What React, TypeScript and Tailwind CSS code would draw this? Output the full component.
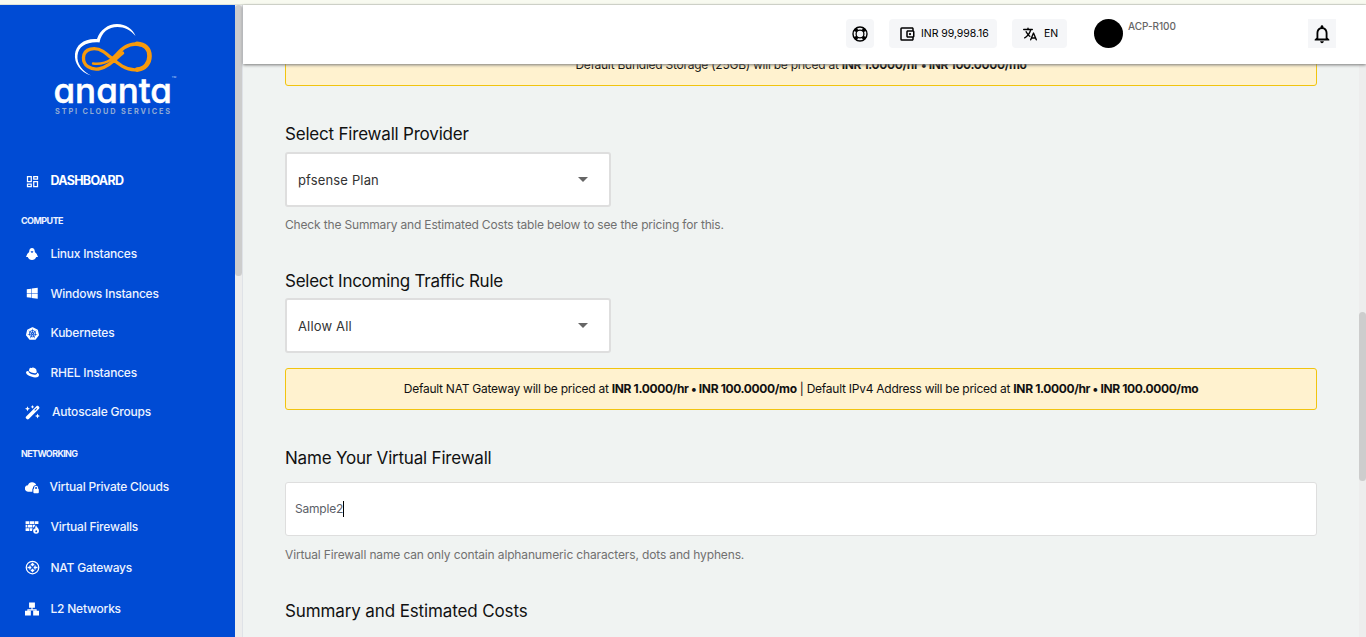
import type { ReactNode } from "react";
import { FaRedhat, FaWindows } from "react-icons/fa6";
import { IoLanguage } from "react-icons/io5";
import { MdNotificationsNone, MdOutlineDashboard, MdOutlineAccountBalanceWallet } from "react-icons/md";
import { SiKubernetes } from "react-icons/si";

function Penguin() {
  return (
    <svg width="12" height="12" viewBox="0 0 24 24" fill="currentColor">
      <path fillRule="evenodd" d="M12 0C8.500 0 6.500 3 6.500 6.500 6.500 8.500 4 10 2.500 12L0 18h3.500C5 22 8 24 12 24s7-2 8.500-6H24l-2.500-6c-1.500-2-4-3.500-4-5.500C17.500 3 15.500 0 12 0ZM12 6l-3 1.500L12 10l3-2.500L12 6Z" />
    </svg>
  );
}

function CloudLock() {
  return (
    <svg width="14" height="14" viewBox="0 0 24 24" fill="currentColor">
      <path d="M13 20H5.500A5.500 5.500 0 0 1 5 9a7.500 7.500 0 0 1 14.200-.5c-3.200 0-5.700 2.300-5.700 5.500-.5.400-.9 1.200-.9 2V20Z" />
      <path fillRule="evenodd" d="M15.500 15v-1.500a3.500 3.500 0 0 1 7 0V15c.7.200 1.200.8 1.200 1.500V21c0 .9-.6 1.500-1.500 1.500h-6.400c-.9 0-1.500-.6-1.500-1.500v-4.500c0-.7.500-1.300 1.200-1.500Zm1.800 0h3.400v-1.500a1.700 1.700 0 0 0-3.400 0V15Z" />
    </svg>
  );
}

function FireWallIcon() {
  return (
    <svg width="14" height="14" viewBox="0 0 24 24" fill="currentColor">
      <path d="M1 2h6v5H1zM8 2h8v5H8zM17 2h6v5h-6zM1 8h3v5H1zM5 8h7v5H5zM13 8h5l-3 5h-2zM1 14h6v5H1zM8 14h5l-1 5H8z" />
      <path fillRule="evenodd" d="M19 9c.5 3 5 5 5 9.500a5 5 0 0 1-10 0c0-2 1-3.500 2.200-4.500.1 1 .5 1.700 1.200 2C17.300 13.500 17.500 11 19 9Zm.3 8c-1.500 1-1.800 2-1.500 3 .5 1.500 3 1.200 3-.7 0-.8-.7-1.500-1.500-2.300Z" />
    </svg>
  );
}

function GatewayIcon() {
  return (
    <svg width="15" height="15" viewBox="0 0 24 24" fill="none" stroke="currentColor" strokeWidth="2">
      <circle cx="12" cy="12" r="10" />
      <path fill="currentColor" stroke="none" d="m12 4 4 4.500h-2.700V10h-2.600V8.500H8zM12 20l4-4.500h-2.700V14h-2.600v1.500H8zM10.500 12l-3.500 4v-2.700H4v-2.600h3V8zM13.500 12l3.500-4v2.700h3v2.600h-3V16z" />
    </svg>
  );
}

function LanIcon() {
  return (
    <svg width="14" height="14" viewBox="0 0 24 24" fill="currentColor">
      <path d="M7 1h10v9h-4v2.500h7V15h4v8H14v-8h4v-.5H6v.5h4v8H0v-8h4v-2.500h7V10H7z" />
    </svg>
  );
}

function WandIcon() {
  return (
    <svg width="15" height="15" viewBox="0 0 24 24" fill="currentColor">
      <path fillRule="evenodd" d="M18.200 1.800c1-1 2.300-1 3.200-.1l1 1c.9.900.9 2.200 0 3.200L6 22.300c-1 1-2.300 1-3.200.1l-1-1c-.9-.9-.9-2.200 0-3.200L18.200 1.800Zm.1 3L15 8.100l1 1 3.300-3.300z" />
      <path d="m4 2 1.200 2.800L8 6 5.200 7.200 4 10 2.800 7.200 0 6l2.800-1.200zM12 0l.9 2.100L15 3l-2.100.9L12 6l-.9-2.100L9 3l2.100-.9zM20 13.500l1.200 2.800L24 17.500l-2.800 1.200L20 21.500l-1.200-2.800L16 17.500l2.800-1.200z" />
    </svg>
  );
}

function Lifebuoy() {
  return (
    <svg width="16" height="16" viewBox="0 0 16 16" fill="none" stroke="#000">
      <circle cx="8" cy="8" r="7" strokeWidth="1.400" />
      <circle cx="8" cy="8" r="3.900" strokeWidth="1.300" />
      <circle cx="8" cy="8" r="5.500" strokeWidth="3.400" pathLength="80" strokeDasharray="8 12" strokeDashoffset="-6" />
    </svg>
  );
}

interface NavItemProps {
  icon: ReactNode;
  label: string;
  row: string;
  text?: string;
}

function NavItem({ icon, label, row, text = "ml-[10.5px] text-[12px] font-medium tracking-[-0.22px]" }: NavItemProps) {
  return (
    <a className={`flex shrink-0 items-center pl-[24px] text-[#edf3ff] ${row}`}>
      <span className="flex w-4 shrink-0 justify-center text-white">{icon}</span>
      <span className={`whitespace-nowrap ${text}`}>{label}</span>
    </a>
  );
}

function Logo() {
  return (
    <svg className="mt-[15px] ml-[50px] block shrink-0" width="136" height="100" viewBox="50 20 136 100">
      <path fill="#fff" d="M91 75.500C80 72 74 63 75 54c1-9 9-16 22-15 3-9 11-15 20-15 9 0 16 5 18.500 12-5-6-11-9-18-9-9 0-16 5-18 15.500-13-1-21 4-22 13-1 8 5 16 13.500 20Z" />
      <g fill="none" stroke="#f79a0b" strokeLinecap="round">
        <path strokeWidth="2.400" d="M93 63.500c7 .8 13-.5 18-4l12-6.500" />
        <path strokeWidth="3.300" d="M112 59c7-6 12-15 24-15 8 0 13.500 4.500 13.500 12.200S144 69.800 135 69.800c-14 0-22-12-32-18.500-8-5-19-3-19.500 6-.5 8.500 7.500 12.700 15 11.700 8-1.200 14-7 24-16" />
        <path strokeWidth="4.600" d="M137 43.800c8 .4 12.500 5 12.500 12.200S145 69 137 69.600" />
      </g>
      <text x="53.500" y="102.500" fill="#fff" fontFamily="Inter, sans-serif" fontSize="35" fontWeight="500" stroke="#fff" strokeWidth=".5" textLength="118.500" lengthAdjust="spacingAndGlyphs" className="[font-feature-settings:'cv11']">ananta</text>
      <text x="171.500" y="82" fill="#9dbdf3" fontFamily="Inter, sans-serif" fontSize="8">™</text>
      <text x="55" y="113.500" fill="#8faad3" fontFamily="Inter, sans-serif" fontSize="7.300" fontWeight="700" textLength="115">STPI CLOUD SERVICES</text>
    </svg>
  );
}

function Sidebar() {
  return (
    <aside className="flex w-[235px] shrink-0 flex-col overflow-hidden bg-[#004bd4]">
      <Logo />
      <NavItem icon={<MdOutlineDashboard size={15} />} label="DASHBOARD" row="mt-[45px] h-8" text="ml-[10.5px] text-[12.5px] font-bold tracking-[-0.7px] text-white" />
      <h6 className="mt-[16px] h-4 shrink-0 pl-[21px] text-[9px] leading-4 font-bold tracking-[-0.55px] text-[#edf3ff]">COMPUTE</h6>
      <NavItem icon={<Penguin />} label="Linux Instances" row="mt-[5px] h-10" />
      <NavItem icon={<FaWindows size={12.500} />} label="Windows Instances" row="h-[39px]" />
      <NavItem icon={<SiKubernetes size={13} />} label="Kubernetes" row="h-10" />
      <NavItem icon={<FaRedhat size={13} />} label="RHEL Instances" row="h-[39px]" />
      <NavItem icon={<WandIcon />} label="Autoscale Groups" row="h-10" text="ml-3 text-[12px] font-medium tracking-[-0.2px]" />
      <h6 className="mt-[14px] h-4 shrink-0 pl-[21px] text-[9px] leading-4 font-bold tracking-[-0.65px] text-[#edf3ff]">NETWORKING</h6>
      <NavItem icon={<CloudLock />} label="Virtual Private Clouds" row="mt-[5px] h-10" text="ml-[9.5px] text-[12px] font-medium tracking-[-0.22px]" />
      <NavItem icon={<FireWallIcon />} label="Virtual Firewalls" row="h-10" />
      <NavItem icon={<GatewayIcon />} label="NAT Gateways" row="h-[41px]" />
      <NavItem icon={<LanIcon />} label="L2 Networks" row="h-[41px]" />
    </aside>
  );
}

function Header() {
  return (
    <header className="relative z-10 flex h-[59px] shrink-0 items-center bg-white pr-[30px] pb-[2px] pl-[603px] shadow-[0_1px_3px_#777]">
      <button className="flex h-[29px] w-7 items-center justify-center rounded-sm bg-[#f5f6f8]"><Lifebuoy /></button>
      <div className="ml-[15px] flex h-[29px] w-[108px] items-center rounded-sm bg-[#f5f6f8] pl-[9px]">
        <MdOutlineAccountBalanceWallet size={18} />
        <span className="ml-[5px] text-[10.5px] tracking-[-0.05px] whitespace-nowrap">INR 99,998.16</span>
      </div>
      <div className="ml-[15px] flex h-[29px] w-[55px] items-center rounded-sm bg-[#f5f6f8] pl-[10px]">
        <IoLanguage size={16} />
        <span className="ml-[6px] text-[10.5px]">EN</span>
      </div>
      <div className="ml-[27px] size-[29px] rounded-full bg-black" />
      <span className="mb-[15px] ml-[5px] text-[10px] font-medium tracking-[-0.05px] text-[#666]">ACP-R100</span>
      <button className="ml-auto flex h-[29px] w-7 items-center justify-center bg-[#f5f6f8]"><MdNotificationsNone size={22} /></button>
    </header>
  );
}

function Heading({ children, className }: { children: ReactNode; className: string }) {
  return <h2 className={`h-6 shrink-0 text-[17px] leading-6 whitespace-nowrap text-[#111] ${className}`}>{children}</h2>;
}

function SelectBox({ value, className }: { value: string; className: string }) {
  return (
    <div className={`flex h-[55px] w-[326px] shrink-0 items-center justify-between rounded-[3px] border-2 border-[#dedede] bg-white pr-[21px] pl-[11px] text-[13px] text-[#333] ${className}`}>
      <span className="pt-[2px]">{value}</span>
      <svg className="mb-px" width="10" height="5" viewBox="0 0 10 5" fill="#666"><path d="M0 0h10L5 5z" /></svg>
    </div>
  );
}

function Notice({ children, className }: { children: ReactNode; className: string }) {
  return (
    <div className={`flex h-[42px] shrink-0 items-center justify-center rounded-[3px] border border-[#f1c40f] bg-[#fff2cf] text-[12px] tracking-[-0.25px] whitespace-nowrap text-[#111] ${className}`}>
      <p>{children}</p>
    </div>
  );
}

function Price() {
  return <b className="font-bold tracking-[-0.36px]">INR 1.0000/hr • INR 100.0000/mo</b>;
}

function Content() {
  return (
    <main className="flex min-h-0 flex-1 overflow-hidden bg-[#f0f3f2]">
      <div className="flex min-w-0 flex-1 flex-col px-[42px]">
        <Notice className="-mt-[20px]">Default Bundled Storage (25GB) will be priced at <Price /></Notice>
        <Heading className="mt-[36px] tracking-[-0.2px]">Select Firewall Provider</Heading>
        <SelectBox value="pfsense Plan" className="mt-[6px] tracking-[0.15px]" />
        <p className="mt-[8px] h-5 shrink-0 text-[12px] leading-5 tracking-[-0.165px] text-[#707070]">Check the Summary and Estimated Costs table below to see the pricing for this.</p>
        <Heading className="mt-[34px] tracking-[-0.26px]">Select Incoming Traffic Rule</Heading>
        <SelectBox value="Allow All" className="mt-[5px] tracking-[0.15px]" />
        <Notice className="mt-[15px]">Default NAT Gateway will be priced at <Price /> | Default IPv4 Address will be priced at <Price /></Notice>
        <Heading className="mt-[36px] tracking-[-0.2px]">Name Your Virtual Firewall</Heading>
        <div className="mt-[12px] flex h-[54px] shrink-0 items-center rounded-[3px] border border-[#dedede] bg-white pl-[9px] text-[12px] tracking-[-0.2px] text-[#5b6068]">
          <span>Sample2</span><span className="h-4 w-px bg-black" />
        </div>
        <p className="mt-[9px] h-5 shrink-0 text-[12px] leading-5 tracking-[-0.14px] text-[#707070]">Virtual Firewall name can only contain alphanumeric characters, dots and hyphens.</p>
        <Heading className="mt-[34px] tracking-[-0.12px]">Summary and Estimated Costs</Heading>
      </div>
      <div className="w-[7px] bg-[#ededed] pt-[248px]"><div className="h-[169px] rounded-sm bg-[#cdcdcd]" /></div>
    </main>
  );
}

export default function App() {
  return (
    <div className="flex h-[637px] w-[1366px] flex-col overflow-hidden font-['Inter',sans-serif]">
      <div className="h-[5px] shrink-0 border-b border-[#dfe3d8] bg-[#f8faf0]" />
      <div className="flex min-h-0 flex-1">
        <Sidebar />
        <div className="w-[8px] shrink-0 border-r border-[#dfe2e7] bg-[#ededed]"><div className="h-[271px] rounded-sm bg-[#cdcdcd]" /></div>
        <div className="flex min-w-0 flex-1 flex-col"><Header /><Content /></div>
      </div>
    </div>
  );
}
